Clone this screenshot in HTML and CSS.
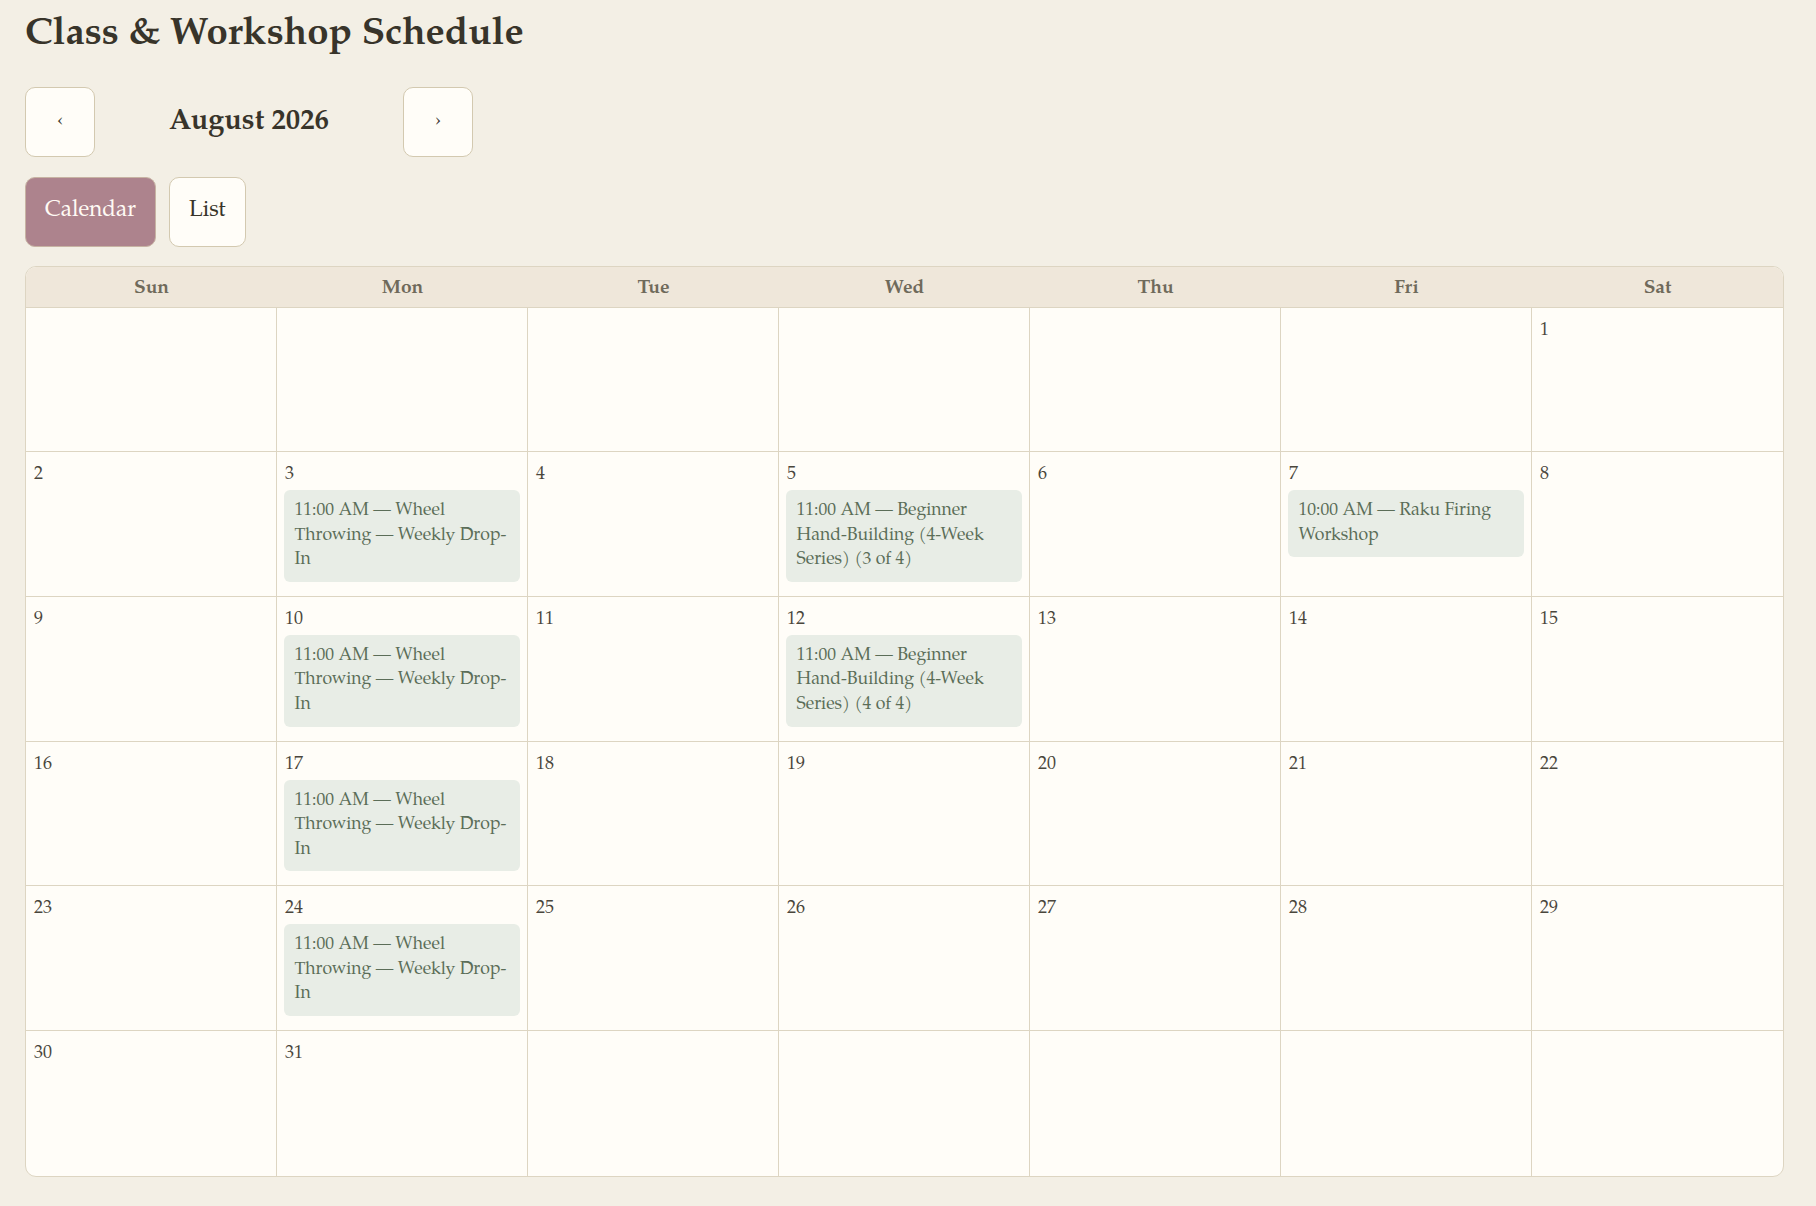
FILE: index.html
```html
<!DOCTYPE html>
<html lang="en">
<head>
<meta charset="utf-8">
<title>Class &amp; Workshop Schedule</title>
<link rel="stylesheet" href="styles.css">
</head>
<body>
<main class="page">
  <h1 class="title">Class &amp; Workshop Schedule</h1>
  <div class="month-nav">
    <button class="btn nav-btn" aria-label="Previous month">&lsaquo;</button>
    <h2 class="month-label">August 2026</h2>
    <button class="btn nav-btn" aria-label="Next month">&rsaquo;</button>
  </div>
  <div class="view-toggle">
    <button class="btn active">Calendar</button>
    <button class="btn">List</button>
  </div>
  <div class="calendar">
    <div class="head">Sun</div>
    <div class="head">Mon</div>
    <div class="head">Tue</div>
    <div class="head">Wed</div>
    <div class="head">Thu</div>
    <div class="head">Fri</div>
    <div class="head">Sat</div>

    <div class="cell"></div>
    <div class="cell"></div>
    <div class="cell"></div>
    <div class="cell"></div>
    <div class="cell"></div>
    <div class="cell"></div>
    <div class="cell"><div class="num">1</div></div>

    <div class="cell"><div class="num">2</div></div>
    <div class="cell"><div class="num">3</div><div class="event">11:00 AM — Wheel Throwing — Weekly Drop-In</div></div>
    <div class="cell"><div class="num">4</div></div>
    <div class="cell"><div class="num">5</div><div class="event">11:00 AM — Beginner Hand-Building (4-Week Series) (3 of 4)</div></div>
    <div class="cell"><div class="num">6</div></div>
    <div class="cell"><div class="num">7</div><div class="event">10:00 AM — Raku Firing Workshop</div></div>
    <div class="cell"><div class="num">8</div></div>

    <div class="cell"><div class="num">9</div></div>
    <div class="cell"><div class="num">10</div><div class="event">11:00 AM — Wheel Throwing — Weekly Drop-In</div></div>
    <div class="cell"><div class="num">11</div></div>
    <div class="cell"><div class="num">12</div><div class="event">11:00 AM — Beginner Hand-Building (4-Week Series) (4 of 4)</div></div>
    <div class="cell"><div class="num">13</div></div>
    <div class="cell"><div class="num">14</div></div>
    <div class="cell"><div class="num">15</div></div>

    <div class="cell"><div class="num">16</div></div>
    <div class="cell"><div class="num">17</div><div class="event">11:00 AM — Wheel Throwing — Weekly Drop-In</div></div>
    <div class="cell"><div class="num">18</div></div>
    <div class="cell"><div class="num">19</div></div>
    <div class="cell"><div class="num">20</div></div>
    <div class="cell"><div class="num">21</div></div>
    <div class="cell"><div class="num">22</div></div>

    <div class="cell"><div class="num">23</div></div>
    <div class="cell"><div class="num">24</div><div class="event">11:00 AM — Wheel Throwing — Weekly Drop-In</div></div>
    <div class="cell"><div class="num">25</div></div>
    <div class="cell"><div class="num">26</div></div>
    <div class="cell"><div class="num">27</div></div>
    <div class="cell"><div class="num">28</div></div>
    <div class="cell"><div class="num">29</div></div>

    <div class="cell last-row"><div class="num">30</div></div>
    <div class="cell last-row"><div class="num">31</div></div>
    <div class="cell last-row"></div>
    <div class="cell last-row"></div>
    <div class="cell last-row"></div>
    <div class="cell last-row"></div>
    <div class="cell last-row"></div>
  </div>
</main>
</body>
</html>
```

FILE: styles.css
```css
html, body {
  margin: 0;
  padding: 0;
  background: #f3efe5;
}

body {
  font-family: "Palatino Linotype", Palatino, "P052", "URW Palladio L", "TeX Gyre Pagella", "Book Antiqua", "Liberation Serif", serif;
  color: #3a362c;
}

.page {
  width: 1759px;
  padding: 12px 0 0 25px;
}

.title {
  margin: 0;
  font-size: 38.4px;
  line-height: 46px;
  font-weight: bold;
  color: #38342a;
}

.month-nav {
  display: flex;
  align-items: center;
  margin-top: 29px;
}

.month-label {
  width: 308px;
  margin: 0;
  text-align: center;
  font-size: 28.8px;
  font-weight: bold;
  color: #38342a;
}

.btn {
  font-family: inherit;
  font-size: 22.4px;
  line-height: 27.5px;
  padding: 20px 19px;
  border: 1px solid #d3c9b0;
  border-radius: 10px;
  background: #fffdf8;
  color: #38342a;
  cursor: pointer;
}

.nav-btn {
  width: 70px;
  height: 70px;
  padding: 0;
  display: flex;
  align-items: center;
  justify-content: center;
  font-size: 20px;
}

.btn.active {
  background: #ad838d;
  border-color: #c7b3a3;
  color: #fffaf4;
}

.view-toggle {
  display: flex;
  gap: 13px;
  margin-top: 20px;
}

.calendar {
  margin-top: 19px;
  display: grid;
  grid-template-columns: repeat(7, 1fr);
  grid-template-rows: 41px repeat(6, 144.7px);
  border: 1px solid #ddd5c2;
  border-radius: 11px;
  overflow: hidden;
  background: #fffdf8;
}

.head {
  background: #efe7da;
  border-bottom: 1px solid #ddd5c2;
  text-align: center;
  font-weight: bold;
  font-size: 19.2px;
  line-height: 36px;
  padding-top: 4px;
  color: #6f6a5b;
}

.cell {
  border-right: 1px solid #ddd5c2;
  border-bottom: 1px solid #ddd5c2;
  padding: 10px 7px 7px 7px;
  min-width: 0;
}

.cell:nth-child(7n) {
  border-right: none;
}

.cell.last-row {
  border-bottom: none;
}

.num {
  font-size: 18px;
  line-height: 27px;
  color: #4a463c;
  padding-left: 1px;
}

.event {
  margin-top: 1px;
  background: #e8ede6;
  border-radius: 6px;
  padding: 9px 10.5px;
  font-size: 17.6px;
  line-height: 24.6px;
  color: #5b6d58;
}
```
